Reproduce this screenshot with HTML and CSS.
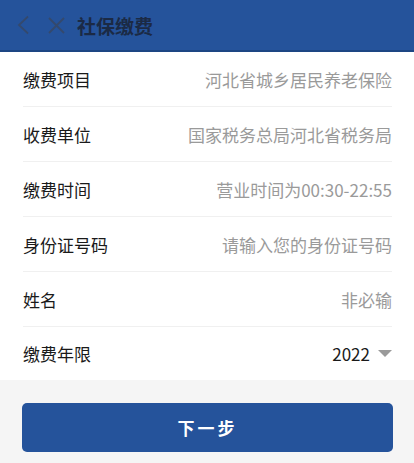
FILE: index.html
```html
<!DOCTYPE html>
<html lang="zh-CN">

<head>
    <meta charset="UTF-8">
    <meta name="viewport" content="width=device-width, initial-scale=1.0">
    <title>社保缴费</title>
    <link rel="stylesheet" href="styles.css">
</head>

<body>
    <!-- Barra superior -->
    <div class="topbar">
        <span class="icone voltar">
            <svg width="12" height="20" viewBox="0 0 12 20">
                <polyline points="11,1.5 2,10 11,18.5" fill="none" stroke="#34496d" stroke-width="1.8" />
            </svg>
        </span>
        <span class="icone">
            <svg width="17" height="17" viewBox="0 0 17 17">
                <line x1="1" y1="1" x2="16" y2="16" stroke="#34496d" stroke-width="1.8" />
                <line x1="16" y1="1" x2="1" y2="16" stroke="#34496d" stroke-width="1.8" />
            </svg>
        </span>
        <span class="titulo">社保缴费</span>
    </div>

    <!-- Lista de campos -->
    <div class="lista">
        <div class="linha">
            <span class="rotulo">缴费项目</span>
            <span class="valor">河北省城乡居民养老保险</span>
        </div>
        <div class="linha">
            <span class="rotulo">收费单位</span>
            <span class="valor">国家税务总局河北省税务局</span>
        </div>
        <div class="linha">
            <span class="rotulo">缴费时间</span>
            <span class="valor">营业时间为00:30-22:55</span>
        </div>
        <div class="linha">
            <span class="rotulo">身份证号码</span>
            <span class="valor">请输入您的身份证号码</span>
        </div>
        <div class="linha">
            <span class="rotulo">姓名</span>
            <span class="valor">非必输</span>
        </div>
        <div class="linha ultima">
            <span class="rotulo">缴费年限</span>
            <span class="valor escuro">2022 <span class="seta"></span></span>
        </div>
    </div>

    <div class="rodape">
        <button id="btnProximo" type="button">下一步</button>
    </div>
</body>

</html>
```

FILE: styles.css
```css
body {
    margin: 0;
    font-family: "Noto Sans CJK SC", "Noto Sans", sans-serif;
    background-color: #f5f5f5;
}

.topbar {
    height: 50px;
    background-color: #25539b;
    border-bottom: 2px solid #1d4683;
    display: flex;
    align-items: center;
    padding-left: 17px;
}

.icone {
    display: flex;
    align-items: center;
    margin-right: 12px;
}

.icone.voltar {
    margin-right: 19px;
}

.titulo {
    font-size: 19px;
    font-weight: bold;
    color: #1b2a45;
}

.lista {
    background-color: white;
    padding: 0 22px 0 23px;
}

.linha {
    height: 54px;
    display: flex;
    align-items: center;
    justify-content: space-between;
    border-bottom: 1px solid #f0f0f0;
}

.linha.ultima {
    border-bottom: none;
    height: 53px;
}

.rotulo {
    font-size: 17px;
    color: #1a1a1a;
}

.valor {
    font-size: 17px;
    color: #9a9a9a;
    display: flex;
    align-items: center;
}

.valor.escuro {
    color: #1a1a1a;
}

.seta {
    width: 0;
    height: 0;
    border-left: 7px solid transparent;
    border-right: 7px solid transparent;
    border-top: 7px solid #9a9a9a;
    margin-left: 8px;
}

.rodape {
    padding: 23px 21px 0 22px;
}

#btnProximo {
    width: 100%;
    height: 49px;
    background-color: #25539b;
    color: white;
    border: none;
    border-radius: 5px;
    font-family: inherit;
    font-size: 17px;
    font-weight: bold;
    letter-spacing: 3px;
}
```
